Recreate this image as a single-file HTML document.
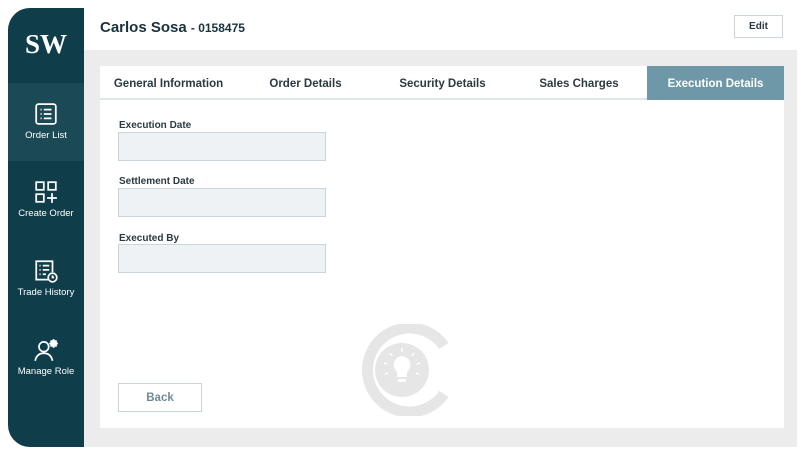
<!DOCTYPE html>
<html><head><style>
*{margin:0;padding:0;box-sizing:border-box}
body{width:805px;height:455px;background:#fff;font-family:"Liberation Sans",sans-serif;position:relative;overflow:hidden}
.sb{position:absolute;left:8px;top:8px;width:76px;height:439px;background:#0f3d4a;border-radius:22px 0 0 22px;overflow:hidden;color:#fff}
.logo{position:absolute;top:0;left:0;width:76px;height:75px;font-family:"Liberation Serif",serif;font-weight:bold;font-size:27px;text-align:center;line-height:72px}
.it{position:absolute;left:0;width:76px;height:78px;text-align:center;font-size:9.5px}
.it svg{display:block;margin:0 auto 4px}
.gray{position:absolute;left:84px;top:50px;width:713px;height:397px;background:#ececec}
.card{position:absolute;left:100px;top:66px;width:684px;height:362px;background:#fff}
.tabs{position:absolute;left:0;top:0;width:684px;height:34px;border-bottom:2px solid #dde7ec;font-size:11.5px;font-weight:bold;color:#2a3a40}
.tab{position:absolute;top:0;height:34px;line-height:36px;text-align:center}
.lbl{position:absolute;left:19px;font-size:10px;font-weight:bold;color:#2a3a40}
.inp{position:absolute;left:18px;width:208px;height:29px;background:#eef2f5;border:1px solid #c9d5dc}
</style></head><body>
<div style="position:absolute;left:100px;top:19px;font-size:15px;font-weight:bold;color:#17323c">Carlos Sosa <span style="font-size:12px">- 0158475</span></div>
<div style="position:absolute;left:734px;top:15px;width:49px;height:23px;border:1px solid #c9d5dc;font-size:10px;font-weight:bold;color:#2a3a40;text-align:center;line-height:22px">Edit</div>
<div class="sb">
<div class="logo">SW</div>
<div class="it" style="top:75px;background:#1b4a56;padding-top:19px">
<svg width="24" height="24" viewBox="0 0 22 22" fill="none" stroke="#fff" stroke-width="1.6"><rect x="2" y="2" width="18" height="18" rx="2"/><path d="M6 7h1M9 7h7M6 11h1M9 11h7M6 15h1M9 15h7"/></svg>Order List</div>
<div class="it" style="top:153px;padding-top:19px">
<svg width="24" height="24" viewBox="0 0 22 22" fill="none" stroke="#fff" stroke-width="1.6"><rect x="2" y="2" width="7" height="7"/><rect x="13" y="2" width="7" height="7"/><rect x="2" y="13" width="7" height="7"/><path d="M16.5 12v9M12 16.5h9"/></svg>Create Order</div>
<div class="it" style="top:231px;padding-top:20px">
<svg width="26" height="24" viewBox="0 0 24 22" fill="none" stroke="#fff" stroke-width="1.6"><path d="M14 19H3V2h15v10"/><path d="M6 6h1M9 6h6M6 10h1M9 10h6M6 14h1M9 14h3"/><circle cx="18" cy="17" r="4"/><path d="M18 15v2h1.5"/></svg>Trade History</div>
<div class="it" style="top:309px;padding-top:21px">
<svg width="26" height="24" viewBox="0 0 24 22" fill="none" stroke="#fff" stroke-width="1.6"><circle cx="10" cy="8" r="4.5"/><path d="M2 21c1-5 4-7 8-7s7 2 8 7"/><circle cx="19" cy="5" r="2.5" fill="#fff"/><path d="M19 1v8M15 5h8M16.2 2.2l5.6 5.6M21.8 2.2l-5.6 5.6"/></svg>Manage Role</div>
</div>
<div class="gray"></div>
<div class="card">
<div class="tabs">
<div class="tab" style="left:0;width:137px">General Information</div>
<div class="tab" style="left:137px;width:137px">Order Details</div>
<div class="tab" style="left:274px;width:137px">Security Details</div>
<div class="tab" style="left:411px;width:136px">Sales Charges</div>
<div class="tab" style="left:547px;width:137px;background:#6e97a8;color:#fff;height:34px">Execution Details</div>
</div>
<div class="lbl" style="top:54px">Execution Date</div><div class="inp" style="top:66px"></div>
<div class="lbl" style="top:110px">Settlement Date</div><div class="inp" style="top:122px"></div>
<div class="lbl" style="top:167px">Executed By</div><div class="inp" style="top:178px"></div>
<div style="position:absolute;left:18px;top:317px;width:84px;height:29px;border:1px solid #c9d5dc;text-align:center;line-height:29px;font-size:11.5px;font-weight:bold;color:#6e8a98">Back</div>
<svg style="position:absolute;left:256px;top:258px" width="92" height="92" viewBox="0 0 92 92">
<path d="M88 22A42 42 0 1 0 88 70" fill="none" stroke="#e6e6e6" stroke-width="11"/>
<circle cx="46" cy="46" r="27" fill="#e6e6e6"/>
<path d="M46 32a9 9 0 0 0-5 16v5h10v-5a9 9 0 0 0-5-16zM42 55h8v3h-8z" fill="#fff"/>
<path d="M46 24v4M34 29l2 3M58 29l-2 3M28 39l3 1M64 39l-3 1M29 50l3-1M63 50l-3-1" stroke="#fff" stroke-width="1.5"/>
</svg>
</div>
</body></html>
